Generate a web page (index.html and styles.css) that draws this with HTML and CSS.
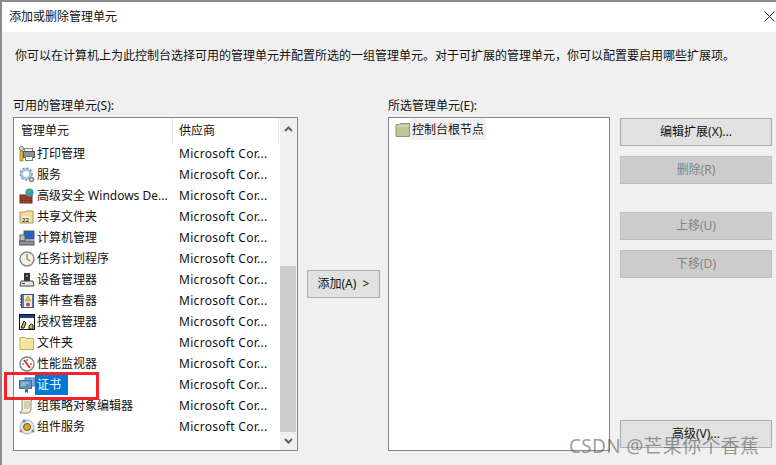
FILE: index.html
```html
<!DOCTYPE html>
<html lang="zh-CN">
<head>
<meta charset="utf-8">
<title>添加或删除管理单元</title>
<link rel="stylesheet" href="styles.css">
</head>
<body>
<div class="window">
  <header class="titlebar">
    <span class="title">添加或删除管理单元</span>
    <svg class="close" width="11" height="11" viewBox="0 0 11 11"><path d="M.5.5l10 10M10.500.5l-10 10" stroke="#222" fill="none"/></svg>
  </header>
  <main class="content">
    <p class="intro">你可以在计算机上为此控制台选择可用的管理单元并配置所选的一组管理单元。对于可扩展的管理单元，你可以配置要启用哪些扩展项。</p>
    <div class="panes">
      <section class="left">
        <div class="label">可用的管理单元(S):</div>
        <div class="box listbox">
          <div class="list">
            <div class="head"><span class="h1">管理单元</span><span class="h2">供应商</span></div>
            <div class="row"><span class="name"><svg class="ico" viewBox="0 0 16 16"><rect x="5.500" y="2.500" width="8" height="3" fill="#f2f2f2" stroke="#888"/><rect x="4.500" y="5.500" width="11" height="6" fill="#8a949c" stroke="#555"/><rect x="6.500" y="10.500" width="7" height="4" fill="#fff" stroke="#777"/><circle cx="2.500" cy="2.500" r="2" fill="#ddd" stroke="#777"/><rect x="1" y="5" width="3" height="10" fill="#e6bf3a" stroke="#7a6418" stroke-width=".6"/></svg><span class="txt">打印管理</span></span><span class="vendor">Microsoft Cor...</span></div>
            <div class="row"><span class="name"><svg class="ico" viewBox="0 0 16 16"><circle cx="7" cy="7" r="4.500" fill="none" stroke="#a9c3de" stroke-width="3"/><circle cx="7" cy="7" r="6" fill="none" stroke="#7e9cbc" stroke-width="1.500" stroke-dasharray="2 2"/><circle cx="12.500" cy="12.500" r="2" fill="#eee" stroke="#7d838a" stroke-width="1.500"/></svg><span class="txt">服务</span></span><span class="vendor">Microsoft Cor...</span></div>
            <div class="row"><span class="name"><svg class="ico" viewBox="0 0 16 16"><rect x="1" y="7" width="12" height="8" fill="#a5492f" stroke="#6d2b1c"/><path d="M1 10h12M1 12.500h12M5 7v3M9 7v3M3 10v2.500M7 10v2.500M11 10v2.500" stroke="#6d2b1c" stroke-width=".7"/><circle cx="10.500" cy="4.500" r="4" fill="#3a8fd8"/><path d="M8 3l3-2 2 2-2 2-1 2-2-2z" fill="#4eb04a"/></svg><span class="txt">高级安全 Windows De...</span></span><span class="vendor">Microsoft Cor...</span></div>
            <div class="row"><span class="name"><svg class="ico" viewBox="0 0 16 16"><path d="M1 3h5l1-1h7v12H1z" fill="#efdc9e" stroke="#a8955a"/><rect x="3" y="7" width="8" height="6" fill="#f7edc4"/><text class="num" x="3" y="13">22</text></svg><span class="txt">共享文件夹</span></span><span class="vendor">Microsoft Cor...</span></div>
            <div class="row"><span class="name"><svg class="ico" viewBox="0 0 16 16"><rect x="5" y="1" width="10" height="8" fill="#2c5fc4" stroke="#555"/><rect x="1" y="5" width="5" height="6" fill="#b8c0c8" stroke="#666"/><rect x="0" y="11" width="15" height="4" fill="#8c9298" stroke="#555"/></svg><span class="txt">计算机管理</span></span><span class="vendor">Microsoft Cor...</span></div>
            <div class="row"><span class="name"><svg class="ico" viewBox="0 0 16 16"><circle cx="8" cy="8" r="7" fill="#f3efe2" stroke="#858d94" stroke-width="1.500"/><path d="M8 3v5l3 2" fill="none" stroke="#9a7a30" stroke-width="1.200"/></svg><span class="txt">任务计划程序</span></span><span class="vendor">Microsoft Cor...</span></div>
            <div class="row"><span class="name"><svg class="ico" viewBox="0 0 16 16"><rect x="5" y="1" width="6" height="8" fill="#333"/><rect x="7" y="3" width="2" height="2" fill="#3fbf4a"/><path d="M2 9h12l1 5H1z" fill="#e6e6e6" stroke="#444"/><rect x="3" y="11" width="3" height="1" fill="#444"/></svg><span class="txt">设备管理器</span></span><span class="vendor">Microsoft Cor...</span></div>
            <div class="row"><span class="name"><svg class="ico" viewBox="0 0 16 16"><rect x="2.500" y="1.500" width="12" height="13" fill="#5d7ea8" stroke="#3b5578"/><rect x="5" y="2" width="8" height="12" fill="#e9edf2"/><path d="M9 3l3 5H6z" fill="#f2c230" stroke="#9c7a14" stroke-width=".5"/><circle cx="9" cy="11.500" r="2" fill="#c8443c"/><path d="M1 3h2M1 6h2M1 9h2M1 12h2" stroke="#333"/></svg><span class="txt">事件查看器</span></span><span class="vendor">Microsoft Cor...</span></div>
            <div class="row"><span class="name"><svg class="ico" viewBox="0 0 16 16"><rect x=".5" y=".5" width="15" height="15" fill="#fff" stroke="#111"/><rect x="1" y="1" width="14" height="3" fill="#1d3f8a"/><path d="M2 14l3-7 2 2-2 5zM11 11a2 2 0 0 1 3 0v4h-4v-3z" fill="#e3c12c" stroke="#111"/></svg><span class="txt">授权管理器</span></span><span class="vendor">Microsoft Cor...</span></div>
            <div class="row"><span class="name"><svg class="ico" viewBox="0 0 16 16"><path d="M1 2.500h5l1 1h7.500v11H1z" fill="#f7e3a0" stroke="#c9ab5c"/><path d="M2 5h12" stroke="#fff3c8"/></svg><span class="txt">文件夹</span></span><span class="vendor">Microsoft Cor...</span></div>
            <div class="row"><span class="name"><svg class="ico" viewBox="0 0 16 16"><circle cx="8" cy="8" r="7" fill="#fff" stroke="#7f858b" stroke-width="1.500"/><path d="M5 4l6 8" stroke="#d6322a" stroke-width="2"/><path d="M8 3v2M3 8h2M11 8h2" stroke="#444"/></svg><span class="txt">性能监视器</span></span><span class="vendor">Microsoft Cor...</span></div>
            <div class="row"><span class="name"><svg class="ico" viewBox="0 0 16 16"><rect x="6" y="1" width="10" height="8" fill="#86aed4" stroke="#4f7ea8"/><rect x="0.500" y="3.500" width="12" height="8" fill="#5f97c9" stroke="#3a6f9e"/><path d="M2 6h8M2 8h5" stroke="#cfe2f2" stroke-width=".8"/><path d="M6 12v4l1.500-1 1.500 1v-4z" fill="#2a6fa8"/><circle cx="7.500" cy="11" r="2" fill="#5a9a7a"/></svg><span class="txt selected">证书</span></span><span class="vendor">Microsoft Cor...</span></div>
            <div class="row"><span class="name"><svg class="ico" viewBox="0 0 16 16"><path d="M3 1h11l-2 2v9l-2 3H1l2-3z" fill="#f2ecd2" stroke="#8f8a70"/><path d="M5 4h6M5 6h6M5 8h6M5 10h5" stroke="#a8a288" stroke-width=".8"/></svg><span class="txt">组策略对象编辑器</span></span><span class="vendor">Microsoft Cor...</span></div>
            <div class="row"><span class="name"><svg class="ico" viewBox="0 0 16 16"><circle cx="8" cy="8" r="7" fill="#e3e6ea" stroke="#a9aeb6"/><circle cx="8" cy="8" r="3.500" fill="#d8a92a" stroke="#6f5a14"/><circle cx="5" cy="2" r="1.500" fill="#7b74c8"/><circle cx="2" cy="12" r="1.500" fill="#d66"/><circle cx="14" cy="12" r="1.500" fill="#5aa85a"/></svg><span class="txt">组件服务</span></span><span class="vendor">Microsoft Cor...</span></div>
          </div>
          <div class="scrollbar">
            <svg class="arrow" width="9" height="6" viewBox="0 0 9 6"><path d="M1 5l3.500-3.500L8 5" fill="none" stroke="#606060" stroke-width="2"/></svg>
            <div class="track"><div class="thumb"></div></div>
            <svg class="arrow" width="9" height="6" viewBox="0 0 9 6"><path d="M1 1l3.500 3.500L8 1" fill="none" stroke="#606060" stroke-width="2"/></svg>
          </div>
        </div>
      </section>
      <div class="middle"><button class="btn add" type="button">添加(A)&nbsp; &gt;</button></div>
      <section class="selected-pane">
        <div class="label">所选管理单元(E):</div>
        <div class="box tree">
          <div class="node"><svg class="ico" viewBox="0 0 16 16"><path d="M1 2.500h3l1-1h9.500v13H1z" fill="#bcc69c" stroke="#8e9878"/><path d="M2 4h12" stroke="#dfe5c8"/></svg><span class="node-text">控制台根节点</span></div>
        </div>
      </section>
      <aside class="actions">
        <button class="btn" type="button">编辑扩展(X)...</button>
        <button class="btn off" type="button">删除(R)</button>
        <button class="btn off gap" type="button">上移(U)</button>
        <button class="btn off" type="button">下移(D)</button>
        <button class="btn adv" type="button">高级(V)...</button>
      </aside>
    </div>
  </main>
  <div class="mark mark-box"></div>
  <div class="mark watermark">CSDN @芒果你个香蕉</div>
</div>
</body>
</html>
```
FILE: styles.css
```css
* { box-sizing: border-box; }
html, body { margin: 0; padding: 0; }
body {
  width: 776px; height: 465px; overflow: hidden;
  font-family: "Noto Sans", "Noto Sans CJK SC", sans-serif;
  font-size: 12px; color: #111;
}
.window {
  position: relative; width: 776px; height: 465px;
  background: #f0f0f0;
  border-top: 2px solid #8c8c8c; border-left: 2px solid #8c8c8c;
  display: flex; flex-direction: column;
}
.titlebar {
  height: 30px; flex: none; background: #fff;
  display: flex; align-items: center; justify-content: space-between;
  padding: 0 0 0 7px;
}
.title { line-height: 16px; }
.close { margin-top: -1px; margin-right: 1px; }
.content { flex: 1; padding: 0 4px 0 11px; display: flex; flex-direction: column; }
.intro { margin: 16px 0 0 2px; height: 16px; line-height: 16px; white-space: nowrap; }
.panes { display: flex; margin-top: 34px; }
.label { height: 16px; line-height: 16px; margin-bottom: 3px; }
.box { background: #fff; border: 1px solid #82878f; height: 334px; }
.left { width: 285px; flex: none; }
.listbox { display: flex; }
.list { width: 266px; flex: none; }
.head { display: flex; height: 25px; line-height: 25px; }
.h1 { width: 159px; padding-left: 7px; border-right: 1px solid #e5e5e5; height: 24px; }
.h2 { width: 106px; padding-left: 6px; border-right: 1px solid #e5e5e5; height: 24px; }
.row { display: flex; height: 21px; align-items: center; }
.name { width: 159px; flex: none; display: flex; align-items: center; padding-left: 5px; white-space: nowrap; overflow: hidden; }
.ico { width: 16px; height: 16px; flex: none; }
.txt { padding: 0 2px; height: 20px; line-height: 20px; }
.selected { background: #0078d7; color: #fff; padding: 0 7px 0 2px; }
.vendor { padding-left: 6px; letter-spacing: .3px; white-space: nowrap; }
.num { font-size: 6px; font-weight: 700; fill: #2d4a2a; }
.scrollbar { flex: 1; background: #f0f0f0; display: flex; flex-direction: column; align-items: center; padding: 8px 1px 6px 0; }
.arrow { flex: none; }
.track { flex: 1; width: 100%; padding-top: 134px; padding-bottom: 4px; display: flex; }
.thumb { width: 100%; background: #cdcdcd; height: 166px; }
.middle { width: 90px; flex: none; padding: 172px 0 0 9px; display: flex; align-items: flex-start; }
.btn {
  display: block; font: inherit; color: #111; height: 28px;
  background: #e1e1e1; border: 1px solid #adadad; padding: 0;
  text-align: center; line-height: 26px;
}
.add { width: 73px; }
.selected-pane { width: 222px; flex: none; }
.tree { padding: 1px 0 0 6px; }
.node { display: flex; align-items: center; height: 21px; }
.node-text { background: #f0f0f0; margin-left: -1px; padding: 0 2px; height: 21px; line-height: 21px; }
.actions { width: 152px; margin-left: 10px; flex: none; padding-top: 20px; display: flex; flex-direction: column; gap: 10px; height: 350px; }
.actions .btn { width: 152px; flex: none; }
.off { background: #ccc; border-color: #bfbfbf; color: #838383; }
.gap { margin-top: 18px; }
.adv { margin-top: auto; }
.mark-box { position: absolute; left: 2px; top: 370px; width: 95px; height: 28px; border: 3px solid #f2232b; }
.watermark { position: absolute; left: 567px; top: 433px; font-size: 19px; line-height: 22px; letter-spacing: .3px; color: rgba(90,90,90,.6); white-space: nowrap; }
```
